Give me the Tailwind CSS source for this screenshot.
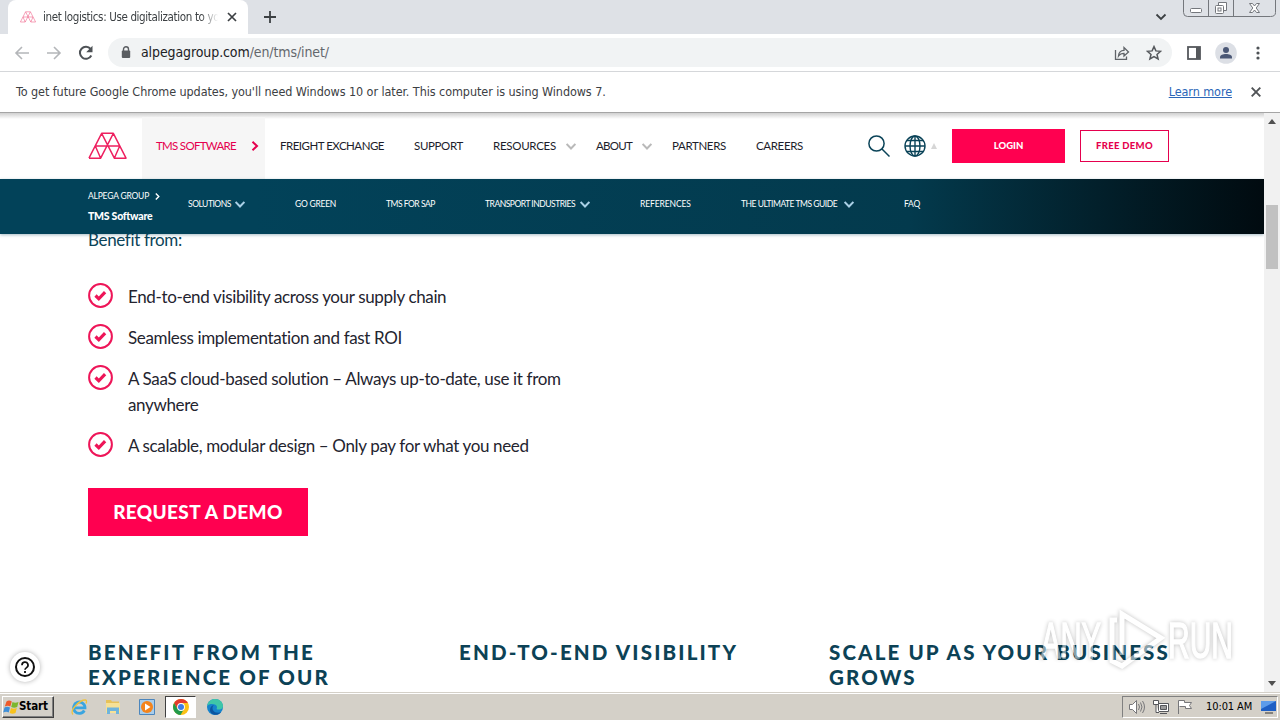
<!DOCTYPE html>
<html lang="en">
<head>
  <meta charset="UTF-8" />
  <meta name="viewport" content="width=device-width, initial-scale=1" />
  <title>inet logistics</title>
  <script src="https://cdn.jsdelivr.net/npm/@tailwindcss/browser@4"></script>
</head>
<body class="w-[1280px] h-[720px] overflow-hidden bg-white flex flex-col relative font-['DejaVu_Sans_Condensed','DejaVu_Sans',sans-serif]">

  <!-- shared shapes -->
  <svg class="hidden">
    <symbol id="logo" viewBox="0 0 40 28">
      <path d="M1 26.500 14 1h12l13 25.500H27L14 1M26 1 13 26.500H1M7.500 14h25M7.500 14l5.500 12.500M32.500 14 27 26.500" fill="none" stroke="currentColor" stroke-width="1.500" stroke-linejoin="round" />
    </symbol>
    <symbol id="chevron" viewBox="0 0 10 7">
      <path d="M.6 1 5 5.500 9.400 1" fill="none" stroke="currentColor" stroke-width="2" />
    </symbol>
    <symbol id="check" viewBox="0 0 25 25">
      <circle cx="12.500" cy="12.500" r="11.400" fill="none" stroke="currentColor" stroke-width="2" />
      <path d="m7.500 12.500 3.300 3.300 6.300-6.600" fill="none" stroke="currentColor" stroke-width="3.200" />
    </symbol>
  </svg>

  <!-- tab strip -->
  <div class="h-[34px] shrink-0 bg-[#dee1e6] flex relative">
    <div class="ml-2 w-[240px] h-full bg-white rounded-t-lg flex items-center pl-3">
      <svg class="w-4 h-3 text-[#f0648c] shrink-0"><use href="#logo" /></svg>
      <div class="ml-[7px] w-[175px] overflow-hidden whitespace-nowrap text-[11.5px] tracking-[-0.36px] text-[#3c4043] pt-px [mask-image:linear-gradient(to_right,black_90%,transparent)]">inet logistics: Use digitalization to your</div>
      <svg class="ml-[9px] w-[10px] h-[10px]" viewBox="0 0 10 10"><path d="m1 1 8 8M9 1 1 9" stroke="#3c4043" stroke-width="1.700" /></svg>
    </div>
    <svg class="ml-4 mt-[11px] w-3 h-3" viewBox="0 0 12 12"><path d="M6 0v12M0 6h12" stroke="#3c4043" stroke-width="1.800" /></svg>
    <svg class="absolute left-[1155px] top-[13px] w-[12px] h-[8px]" viewBox="0 0 12 8"><path d="m1.500 1.500 4.500 4.500 4.500-4.500" fill="none" stroke="#3c4043" stroke-width="1.800" /></svg>
    <!-- window buttons -->
    <svg class="absolute left-[1182px] top-0 w-[96px] h-[18px]" viewBox="0 0 96 18" fill="none" stroke="#74777c">
      <path d="M1.500 0v12.500q0 4 4 4h83q5 0 5-4V0M26.500 0v16M51.500 0v16" />
      <rect x="8.500" y="8.500" width="11" height="4" rx="1" fill="#fff" />
      <path d="M36.500 5.500v-3h8v8h-3" fill="#fff" /><rect x="33.500" y="5.500" width="8" height="8" rx="1" fill="#fff" /><rect x="36" y="8" width="3" height="3" />
      <path d="M67.500 3.500h3l2 2.500 2-2.500h3l-3.300 4.500 3.300 4.500h-3l-2-2.500-2 2.500h-3l3.300-4.500z" fill="#fff" />
    </svg>
  </div>

  <!-- address bar -->
  <div class="h-[38px] shrink-0 bg-white border-b border-[#d5d7da] flex items-center">
    <svg class="ml-[14px] w-4 h-4" viewBox="0 0 16 16" fill="none" stroke="#b4b6b9" stroke-width="1.600"><path d="M15 8H2M8 2 2 8l6 6" /></svg>
    <svg class="ml-4 w-4 h-4" viewBox="0 0 16 16" fill="none" stroke="#b4b6b9" stroke-width="1.600"><path d="M1 8h13M8 2l6 6-6 6" /></svg>
    <svg class="ml-4 w-4 h-4" viewBox="0 0 16 16"><path d="M13.300 10.500A6 6 0 1 1 12.600 4" fill="none" stroke="#4e5256" stroke-width="2" /><path d="M14.500.8v6.400H8.200z" fill="#4e5256" /></svg>
    <div class="ml-[14px] w-[1064px] h-[29px] rounded-full bg-[#f1f3f4] flex items-center">
      <svg class="ml-[13px] w-[10px] h-[13px]" viewBox="0 0 10 13"><rect x=".8" y="4.500" width="8.400" height="7.500" rx="1" fill="#5a5d61" /><path d="M2.500 5V3.300a2.500 2.500 0 0 1 5 0V5" fill="none" stroke="#5a5d61" stroke-width="1.400" /></svg>
      <div class="ml-[10px] text-[14px] tracking-[-0.1px] whitespace-nowrap text-[#202124]">alpegagroup.com<span class="text-[#63676c]">/en/tms/inet/</span></div>
      <svg class="ml-auto w-4 h-4" viewBox="0 0 16 16" fill="none" stroke="#5f6368" stroke-width="1.300"><path d="M1.500 5v9.300h11V11.500M4.500 11c.3-3.500 2-5.500 5.500-5.600V2.500L14.500 7 10 11V8.300c-2.500 0-4.200.8-5.500 2.700z" /></svg>
      <svg class="ml-4 mr-[10px] w-4 h-4" viewBox="0 0 16 16" fill="none" stroke="#55585c" stroke-width="1.500"><path d="m8 1.600 1.900 4.300 4.700.4-3.600 3.100 1.100 4.600L8 11.600 3.900 14 5 9.400 1.400 6.300l4.700-.4z" /></svg>
    </div>
    <svg class="ml-[15px] w-[14px] h-[14px]" viewBox="0 0 14 14"><rect x="1" y="1" width="12" height="12" fill="none" stroke="#55585c" stroke-width="1.800" /><path d="M9 1h4v12H9z" fill="#55585c" /></svg>
    <svg class="ml-[14px] w-[22px] h-[22px]" viewBox="0 0 22 22"><circle cx="11" cy="11" r="10.800" fill="#dcdfe5" /><circle cx="11" cy="8" r="3" fill="#4a5775" /><path d="M5 16.500v-1.300c0-2.200 3-3.200 6-3.200s6 1 6 3.200v1.300z" fill="#4a5775" /></svg>
    <svg class="ml-[19px] w-1 h-4" viewBox="0 0 4 16" fill="#4e5256"><circle cx="2" cy="3" r="1.600" /><circle cx="2" cy="8" r="1.600" /><circle cx="2" cy="13" r="1.600" /></svg>
  </div>

  <!-- info bar -->
  <div class="h-[41px] shrink-0 bg-white border-b border-[#a5a5a5] flex items-center pl-4 text-[12.5px] tracking-[-0.075px] whitespace-nowrap text-[#3c4043]">
    <div>To get future Google Chrome updates, you'll need Windows 10 or later. This computer is using Windows 7.</div>
    <a href="#" class="ml-auto mr-[19px] text-[#2b66b8] underline">Learn more</a>
    <svg class="mr-[19px] w-[10px] h-[10px]" viewBox="0 0 10 10"><path d="m.7.700 8.600 8.600M9.300.700.700 9.300" stroke="#505356" stroke-width="1.900" /></svg>
  </div>

  <div class="flex h-[579px] shrink-0">
    <main class="relative w-[1264px] bg-white overflow-hidden font-[Lato,sans-serif]">
      <!-- header -->
      <header class="h-[66px] flex items-center whitespace-nowrap text-[11.5px] tracking-[-0.35px] text-[#1d1d2b] bg-linear-to-b from-[#d0d0d0] to-white to-[6px]">
        <svg class="ml-[88px] w-[39px] h-[28px] text-[#ee1f5f]"><use href="#logo" /></svg>
        <a class="ml-[15px] w-[123px] h-[62px] mt-1 pb-1 pl-[14px] pr-[6px] bg-[#f6f6f6] flex items-center justify-between text-[#e5004e] tracking-[-0.7px]">TMS SOFTWARE
          <svg class="w-[8px] h-[10px]" viewBox="0 0 8 10"><path d="m1.500.800 4.500 4.200-4.500 4.200" fill="none" stroke="currentColor" stroke-width="2" /></svg></a>
        <a class="ml-[15px] w-[134px] tracking-[-0.5px]">FREIGHT EXCHANGE</a>
        <a class="w-[79px]">SUPPORT</a>
        <a class="w-[73px] tracking-[-0.28px]">RESOURCES</a>
        <svg class="w-[10px] h-[7px] mr-5 text-[#b9b9b9]"><use href="#chevron" /></svg>
        <a class="w-[46px] tracking-[-0.7px]">ABOUT</a>
        <svg class="w-[10px] h-[7px] mr-5 text-[#b9b9b9]"><use href="#chevron" /></svg>
        <a class="w-[84px]">PARTNERS</a>
        <a class="w-[112px]">CAREERS</a>
        <svg class="w-[22px] h-[22px]" viewBox="0 0 22 22" fill="none" stroke="#0a4358" stroke-width="1.500"><circle cx="8.500" cy="8.500" r="7.600" /><path d="m14 14 7.500 7.500" /></svg>
        <svg class="ml-[14px] w-[22px] h-[22px]" viewBox="0 0 22 22" fill="none" stroke="#0a4358" stroke-width="1.400"><circle cx="11" cy="11" r="10" /><ellipse cx="11" cy="11" rx="5" ry="10" /><path d="M11 1v20M1 11h20M2.800 5.500h16.400M2.800 16.500h16.400" /></svg>
        <svg class="ml-[5px] w-[6px] h-[6px]" viewBox="0 0 6 6"><path d="M3 0 6 6H0z" fill="#d6d6d6" /></svg>
        <a class="ml-[15px] w-[113px] h-[34px] bg-[#ff0050] text-white font-black text-[9.5px] tracking-normal flex items-center justify-center">LOGIN</a>
        <a class="ml-[15px] w-[89px] h-[32px] border border-[#e5004e] text-[#e5004e] font-black text-[9.5px] tracking-[0.3px] flex items-center justify-center">FREE DEMO</a>
      </header>

      <!-- sub navigation -->
      <nav class="relative z-10 h-[55px] flex bg-linear-to-r from-[#024259] from-20% via-[#033a4d] via-72% to-[#010b10] text-white text-[8.5px] tracking-[-0.48px] whitespace-nowrap shadow-[0_1px_3px_rgba(0,60,90,0.35)]">
        <div class="ml-[88px] w-[100px] pt-[11px]">
          <div class="h-[13px] leading-[13px] tracking-[-0.2px] flex items-center gap-[6px]">ALPEGA GROUP<svg class="w-[5px] h-[7px]" viewBox="0 0 5 7"><path d="m.8.500 3 3-3 3" fill="none" stroke="#fff" stroke-width="1.400" /></svg></div>
          <div class="mt-[6px] leading-[15px] text-[10.5px] tracking-[-0.25px] font-black">TMS Software</div>
        </div>
        <div class="flex items-center h-[50px]">
          <a class="w-[47px]">SOLUTIONS</a>
          <svg class="w-[10px] h-[7px] mr-[50px] text-[#a9d0e6]"><use href="#chevron" /></svg>
          <a class="w-[91px] tracking-[-0.25px]">GO GREEN</a>
          <a class="w-[99px]">TMS FOR SAP</a>
          <a class="w-[95px]">TRANSPORT INDUSTRIES</a>
          <svg class="w-[10px] h-[7px] mr-[50px] text-[#a9d0e6]"><use href="#chevron" /></svg>
          <a class="w-[101px] tracking-[-0.1px]">REFERENCES</a>
          <a class="w-[103px]">THE ULTIMATE TMS GUIDE</a>
          <svg class="w-[10px] h-[7px] mr-[50px] text-[#a9d0e6]"><use href="#chevron" /></svg>
          <a class="tracking-[-0.2px]">FAQ</a>
        </div>
      </nav>

      <!-- page content -->
      <section class="pl-[88px] text-[17px] leading-[26px] tracking-[-0.35px] text-[#24242f] whitespace-nowrap">
        <p class="-mt-[7px] text-[#0c4459]">Benefit from:</p>
        <ul class="mt-[30px] space-y-[15px]">
          <li class="flex gap-[15px]"><svg class="w-[25px] h-[25px] text-[#ee1558]"><use href="#check" /></svg><div class="pt-px -mb-px">End-to-end visibility across your supply chain</div></li>
          <li class="flex gap-[15px]"><svg class="w-[25px] h-[25px] text-[#ee1558]"><use href="#check" /></svg><div class="pt-px -mb-px">Seamless implementation and fast ROI</div></li>
          <li class="flex gap-[15px]"><svg class="w-[25px] h-[25px] text-[#ee1558]"><use href="#check" /></svg><div class="pt-px -mb-px">A SaaS cloud-based solution – Always up-to-date, use it from<br />anywhere</div></li>
          <li class="flex gap-[15px]"><svg class="w-[25px] h-[25px] text-[#ee1558]"><use href="#check" /></svg><div class="pt-px -mb-px">A scalable, modular design – Only pay for what you need</div></li>
        </ul>
        <a class="mt-[30px] w-[220px] h-[48px] bg-[#ff0050] text-white font-black text-[19px] tracking-[0.35px] flex items-center justify-center">REQUEST A DEMO</a>
        <div class="mt-[104px] flex text-[20.5px] leading-[25px] font-black tracking-[2.15px] text-[#0c4256]">
          <h2 class="w-[371px]">BENEFIT FROM THE<br />EXPERIENCE OF OUR</h2>
          <h2 class="w-[370px]">END-TO-END VISIBILITY</h2>
          <h2>SCALE UP AS YOUR BUSINESS<br />GROWS</h2>
        </div>
      </section>

      <!-- help button -->
      <div class="absolute left-[10px] top-[539px] w-[30px] h-[30px] rounded-full bg-white shadow-[0_0_5px_rgba(0,0,0,0.3)] flex items-center justify-center">
        <svg class="w-[22px] h-[22px]" viewBox="0 0 22 22" fill="none" stroke="#111" stroke-width="2"><circle cx="11" cy="11" r="9" /><path d="M8 9.200a3 3 0 1 1 4.600 2.400c-1 .7-1.600 1.100-1.600 2.200" stroke-width="1.700" /><path d="M11 15v2" stroke-width="1.800" /></svg>
      </div>

      <!-- watermark -->
      <svg class="absolute left-[1030px] top-[489px] w-[215px] h-[76px] overflow-visible drop-shadow-[0_0_2px_rgba(0,0,0,0.5)] opacity-50" viewBox="0 0 215 76" fill="#fff" stroke="#fff">
        <text x="11" y="56" font-family="Liberation Sans" font-size="50" textLength="60" lengthAdjust="spacingAndGlyphs" stroke-width="1.500">ANY</text>
        <text x="138" y="56" font-family="Liberation Sans" font-size="50" textLength="65" lengthAdjust="spacingAndGlyphs" stroke-width="1.500">RUN</text>
        <path d="M92 53V12l39 24-39 28-10-5V18h5" fill="none" stroke-width="5" />
      </svg>
    </main>

    <!-- scrollbar -->
    <div class="w-4 bg-[#f1f1f1] relative">
      <svg class="absolute left-1 top-[6px] w-2 h-[5px]" viewBox="0 0 8 5"><path d="M4 0 8 5H0z" fill="#505050" /></svg>
      <div class="absolute left-[2px] top-[92px] w-3 h-[64px] bg-[#c1c1c1]"></div>
      <svg class="absolute left-1 bottom-[6px] w-2 h-[5px]" viewBox="0 0 8 5"><path d="M0 0h8L4 5z" fill="#505050" /></svg>
    </div>
  </div>

  <!-- taskbar -->
  <div class="h-[28px] shrink-0 bg-[#d4d0c8] border-t border-[#d4d0c8] shadow-[inset_0_1px_0_#fff] flex items-center pt-px">
    <div class="ml-[2px] w-[52px] h-[22px] border border-t-white border-l-white border-b-[#404040] border-r-[#404040] shadow-[inset_-1px_-1px_0_#808080] flex items-center text-[11.5px] font-bold text-black">
      <svg class="w-4 h-4 shrink-0" viewBox="0 0 16 16"><path d="M3.500 2.500q2.500-1.800 5.300 0L7.300 7.500q-2.500-1.500-5.500 0z" fill="#ee5a2b" /><path d="M9.500 3q2.500 1.300 6 0l-1.300 5q-3 1.300-6 0z" fill="#7db72f" /><path d="M1.500 8.500q2.500-1.500 5.500 0l-1.300 5q-2.500-1.500-5.500 0z" fill="#3f8fd8" /><path d="M8 9q2.500 1.300 5.800 0l-1.300 5q-3 1.300-5.800 0z" fill="#f8c21c" /></svg>
      <span class="tracking-[-0.1px]">Start</span>
    </div>
    <svg class="ml-[17px] w-4 h-4 overflow-visible" viewBox="0 0 16 16" fill="none"><path d="M13.300 11.500A5.700 5.700 0 1 1 14 8.800H4" stroke="#3aa5e0" stroke-width="2.800" /><path d="M2 15.500C-2.500 12 9 .500 14.500 1c2 .3.500 3.500.5 3.500" stroke="#f0c23c" stroke-width="1.300" /></svg>
    <svg class="ml-[18px] w-4 h-4" viewBox="0 0 16 16"><path d="M1 1h5l1 1.500h7V14H1z" fill="#e7c25a" /><path d="M1 4h14v10H1z" fill="#f6e196" /><path d="M2 8.500h12V15h-3v-3H5v3H2z" fill="#6fb4dc" /></svg>
    <svg class="ml-[18px] w-4 h-4" viewBox="0 0 16 16"><path d="M.500.500h15v15H.500z" fill="#a9cdea" stroke="#4c86bd" /><circle cx="8" cy="8" r="6" fill="#f4841c" /><path d="m6 4.500 5.500 3.500L6 11.500z" fill="#fff" /></svg>
    <div class="ml-[10px] w-[31px] h-[22px] bg-white border border-t-[#404040] border-l-[#404040] border-b-white border-r-white flex items-center justify-center">
      <svg class="w-4 h-4" viewBox="0 0 16 16"><circle cx="8" cy="8" r="8" fill="#fbc116" /><path d="M1.100 4A8 8 0 0 1 14.900 4H8L4.500 10z" fill="#e33b2e" /><path d="M1.100 4A8 8 0 0 0 7.500 16l3.500-6H4.500z" fill="#229a4b" /><circle cx="8" cy="8" r="3.900" fill="#fff" /><circle cx="8" cy="8" r="3" fill="#3c7de6" /></svg>
    </div>
    <svg class="ml-[11px] w-4 h-4" viewBox="0 0 16 16"><circle cx="8" cy="8" r="8" fill="#1683cc" /><path d="M.2 7C1 2 4.500 0 8 0c5 0 8 3.500 8 7 0 3-3 4-5.500 3.500-1.500-.3-.5-1-.5-2.500C10 5 3 3.500.2 7z" fill="#3ec6a8" /><path d="M5.500 9c0 4 4 5.500 8.500 4.300C10 18 3 15.500 3 11c0-3 2-4.500 4-5-.8.800-1.500 1.600-1.500 3z" fill="#0c55a0" /></svg>
    <div class="ml-auto mr-[2px] w-[156px] h-[22px] border border-t-[#808080] border-l-[#808080] border-b-white border-r-white flex items-center text-[11px] text-black">
      <svg class="ml-[6px] w-4 h-4" viewBox="0 0 16 16" fill="none" stroke="#77777a"><path d="M.500 5.500h3l4-4v13l-4-4h-3z" fill="#fff" /><path d="M9.500 5q2 3 0 6M11.500 3.500q3 4.500 0 9M13.500 2q4 6 0 12" /></svg>
      <svg class="ml-2 w-4 h-4" viewBox="0 0 16 16" fill="none" stroke="#55565a"><path d="M5.500 4.500h10v8h-10zM7 14.500h7" fill="#fff" /><path d="M7.500 6.500h6v4h-6z" fill="#9a9a9a" /><path d="M.500 1.500h5v4h-5zM3 5.500v8h3" fill="#fff" /></svg>
      <svg class="ml-2 w-4 h-4" viewBox="0 0 16 16"><path d="M1.500 15V1.500h6v2h7l-2 3 2 3h-6v-2h-6" fill="#fff" stroke="#77777a" /></svg>
      <div class="ml-[13px] w-[48px] tracking-[-0.1px] whitespace-nowrap">10:01 AM</div>
      <svg class="ml-[7px] w-[15px] h-[14px]" viewBox="0 0 15 14"><path d="M0 1h15v10H0z" fill="#1e5fc4" /><path d="M0 1h15L0 9z" fill="#5d9cea" /><path d="M4 13h8" stroke="#333" /></svg>
    </div>
  </div>
</body>
</html>
